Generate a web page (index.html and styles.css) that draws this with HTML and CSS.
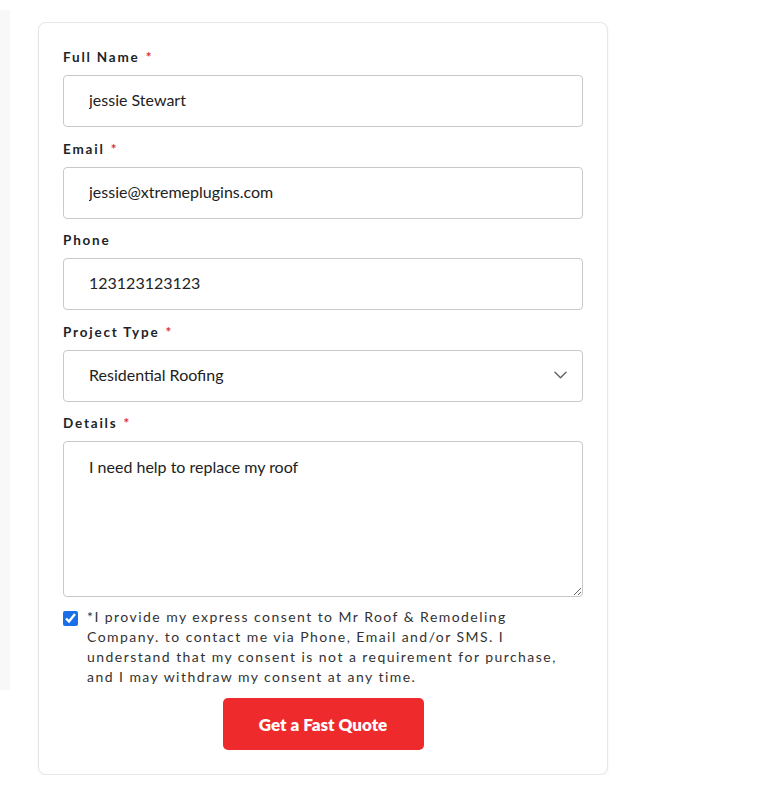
FILE: index.html
```html
<!DOCTYPE html>
<html lang="en">
<head>
<meta charset="utf-8">
<title>Get a Fast Quote</title>
<link rel="stylesheet" href="styles.css">
</head>
<body>
<div class="page">
  <div class="side-strip"></div>
  <form class="card">
    <div class="field">
      <label class="label">Full Name <span class="req">*</span></label>
      <input class="input" type="text" value="jessie Stewart">
    </div>
    <div class="field">
      <label class="label">Email <span class="req">*</span></label>
      <input class="input" type="text" value="jessie@xtremeplugins.com">
    </div>
    <div class="field">
      <label class="label">Phone</label>
      <input class="input" type="text" value="123123123123">
    </div>
    <div class="field">
      <label class="label">Project Type <span class="req">*</span></label>
      <div class="select">
        <span class="select-value">Residential Roofing</span>
        <svg class="chevron" width="13" height="8" viewBox="0 0 13 8"><path d="M1 1.2l5.5 5.5 5.5-5.5" fill="none" stroke="#666" stroke-width="1.5" stroke-linecap="round" stroke-linejoin="round"/></svg>
      </div>
    </div>
    <div class="field">
      <label class="label">Details <span class="req">*</span></label>
      <textarea class="textarea">I need help to replace my roof</textarea>
    </div>
    <div class="consent">
      <input class="check" type="checkbox" checked>
      <p class="consent-text">*I provide my express consent to Mr Roof &amp; Remodeling Company. to contact me via Phone, Email and/or SMS. I understand that my consent is not a requirement for purchase, and I may withdraw my consent at any time.</p>
    </div>
    <div class="actions">
      <button class="btn" type="button">Get a Fast Quote</button>
    </div>
  </form>
</div>
</body>
</html>
```
FILE: styles.css
```css
* { box-sizing: border-box; }
html, body { margin: 0; padding: 0; background: #fff; }
body { font-family: Lato, "Noto Sans", sans-serif; color: #222; }

.page {
  display: flex;
  align-items: flex-start;
}
.side-strip {
  width: 10px;
  height: 680px;
  margin-top: 10px;
  background: #f8f8f8;
}
.card {
  margin-top: 22px;
  margin-left: 28px;
  width: 570px;
  border: 1px solid #e6e6e6;
  border-radius: 8px;
  padding: 25px 24px 24px;
  box-shadow: 0 1px 3px rgba(0,0,0,0.05);
  background: #fff;
}
.field { margin-bottom: 12.5px; }
.label {
  display: block;
  font-weight: 700;
  font-size: 13.5px;
  line-height: 18px;
  letter-spacing: 1.8px;
  color: #1d2428;
  margin-bottom: 9px;
}
.req { color: #d9323a; margin-left: 1px; }
.input, .select, .textarea {
  display: block;
  width: 100%;
  border: 1px solid #c9c9c9;
  border-radius: 4px;
  background: #fff;
  font-family: Lato, "Noto Sans", sans-serif;
  font-size: 16px;
  color: #222;
}
.input {
  height: 52px;
  padding: 0 25px 3px;
  outline: none;
}
.select {
  height: 52px;
  padding: 0 15px 2px 25px;
  display: flex;
  align-items: center;
  justify-content: space-between;
}
.textarea {
  height: 156px;
  padding: 14px 25px;
  resize: vertical;
  outline: none;
  line-height: 22px;
}
.consent {
  display: flex;
  align-items: flex-start;
  gap: 9px;
  margin-top: -2.5px;
}
.check {
  width: 15px;
  height: 15px;
  margin: 4px 0 0 0;
  accent-color: #1a6ee8;
  flex: none;
}
.consent-text {
  margin: 0;
  max-width: 484px;
  font-size: 14px;
  line-height: 20px;
  letter-spacing: 1.45px;
  color: #333;
}
.actions {
  display: flex;
  justify-content: center;
  margin-top: 11px;
}
.btn {
  width: 201px;
  height: 52px;
  border: 0;
  border-radius: 5px;
  background: #ee2a2c;
  color: #fff;
  font-family: Lato, "Noto Sans", sans-serif;
  font-weight: 800;
  font-size: 17px;
}
```
